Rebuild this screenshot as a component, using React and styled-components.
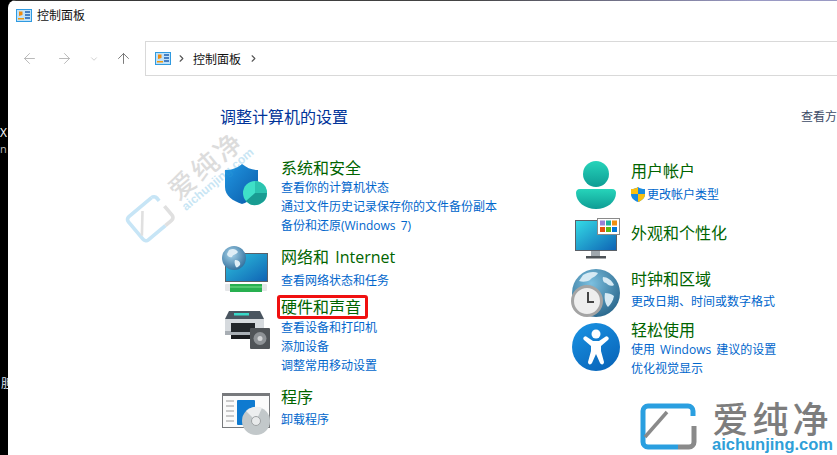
import styled, { createGlobalStyle } from "styled-components";
import { ArrowLeft, ArrowRight, ArrowUp, ChevronDown, ChevronRight } from "lucide-react";

const FONT = `"Open Sans", "Noto Sans CJK SC", sans-serif`;

const Global = createGlobalStyle`
  html, body { margin: 0; padding: 0; background: #000; }
  body { font-family: ${FONT}; }
`;

const Page = styled.div`
  position: relative;
  display: flex;
  width: 837px;
  height: 455px;
  overflow: hidden;
  background: #000;
`;

const Desktop = styled.div`
  position: relative;
  flex: 0 0 8px;
  overflow: hidden;
`;

const DesktopLabel = styled.span`
  position: absolute;
  left: ${(p) => p.$left}px;
  top: ${(p) => p.$top}px;
  font-size: ${(p) => p.$size}px;
  line-height: 1;
  color: ${(p) => p.$color};
`;

const Window = styled.div`
  flex: 1;
  min-width: 0;
  display: flex;
  flex-direction: column;
  overflow: hidden;
  background: #fff;
  border-top-left-radius: 8px;
`;

const TopEdge = styled.div`
  height: 1px;
  background: linear-gradient(90deg, #333 0%, #444 55%, #9a9ac4 90%);
`;

const TitleBar = styled.div`
  height: 28px;
  display: flex;
  align-items: center;
  gap: 5px;
  padding-left: 8px;
  font-size: 12px;
  color: #111;
`;

const NavBar = styled.div`
  margin-top: 12px;
  height: 35px;
  display: flex;
  align-items: center;
  padding-left: 4px;
`;

const NavButton = styled.div`
  width: ${(p) => p.$w}px;
  display: flex;
  justify-content: center;
  color: ${(p) => p.$color};
`;

const AddressBox = styled.div`
  flex: 1;
  height: 100%;
  margin: 0 -10px 0 5px;
  box-sizing: border-box;
  border: 1px solid #d9d9d9;
  display: flex;
  align-items: center;
  padding-left: 9px;
  font-size: 12px;
  color: #111;
`;

const Crumb = styled.span`
  margin: 0 ${(p) => p.$right}px 0 ${(p) => p.$left}px;
  display: flex;
  color: #555;
`;

const Content = styled.div`
  padding: 28px 0 0 213px;
`;

const Header = styled.div`
  display: grid;
  grid-template-columns: 580px max-content;
  align-items: center;
  height: 22px;
  white-space: nowrap;
`;

const Heading = styled.div`
  margin-left: -1px;
  font-size: 16px;
  color: #003399;
`;

const ViewBy = styled.div`
  font-size: 12px;
  color: #3c4a66;
`;

const Columns = styled.div`
  margin-top: 32px;
  display: grid;
  grid-template-columns: 350px 280px;
`;

const Column = styled.div`
  padding-top: ${(p) => p.$top || 0}px;
`;

const Category = styled.div`
  display: flex;
  margin-top: ${(p) => p.$gap || 0}px;
`;

const IconSlot = styled.div`
  flex: 0 0 60px;
  height: 0;
  margin-top: ${(p) => p.$offset || 0}px;
  svg { display: block; overflow: visible; }
`;

const Body = styled.div`
  display: flex;
  flex-direction: column;
  align-items: flex-start;
`;

const Title = styled.div`
  position: relative;
  font-size: 16px;
  line-height: 20px;
  word-spacing: 2px;
  color: #006400;
  white-space: nowrap;
  margin-bottom: ${(p) => p.$after || 0}px;
  ${(p) =>
    p.$marked &&
    `&::after {
      content: "";
      position: absolute;
      left: -4px;
      right: -7px;
      top: -2px;
      bottom: -2px;
      border: 3px solid #f01010;
      border-radius: 3px;
    }`}
`;

const Link = styled.div`
  display: flex;
  align-items: center;
  gap: 2px;
  font-size: 12px;
  line-height: 19px;
  word-spacing: 2px;
  color: #0066cc;
  white-space: nowrap;
`;

const Mark = styled.div`
  position: absolute;
  left: ${(p) => p.$left}px;
  top: ${(p) => p.$top}px;
  display: flex;
  gap: 15px;
  opacity: ${(p) => p.$fade};
  transform: ${(p) => p.$transform};
  svg { flex: none; }
`;

const MarkText = styled.div`
  display: flex;
  flex-direction: column;
  align-items: center;
`;

const MarkName = styled.div`
  font-size: 36px;
  line-height: 33px;
  font-weight: 500;
  letter-spacing: 4px;
  color: #7d7d7d;
`;

const MarkUrl = styled.div`
  font-family: "Liberation Sans", sans-serif;
  font-size: 16.5px;
  line-height: 17px;
  font-weight: 700;
  color: #2f9fd8;
`;

const PanelGlyph = () => (
  <svg width="16" height="13" viewBox="0 0 16 13">
    <rect x="0.5" y="0.5" width="15" height="12" fill="#bfe2fa" stroke="#2f9ae0" />
    <path d="M3 2.500h3.500v3.500l-3.500 1z" fill="#f08c10" />
    <rect x="2" y="9" width="6" height="1.500" fill="#f09a10" />
    <path d="M9 3h5M9 6h5M9 9h5" stroke="#1f5fb0" strokeWidth="1.300" />
  </svg>
);

const ShieldIcon = () => (
  <svg width="48" height="48" viewBox="0 0 48 48">
    <defs>
      <linearGradient id="sh" x1="0" y1="0" x2="1" y2="1">
        <stop offset="0" stopColor="#2197e2" />
        <stop offset="1" stopColor="#0a5aa8" />
      </linearGradient>
    </defs>
    <path d="M21 2c5 4 10 6 16 6v17c0 9-7 14-16 17C12 39 4 34 4 25V8c7 0 12-2 17-6z" fill="url(#sh)" />
    <circle cx="34" cy="31" r="12" fill="#3fe0c8" />
    <path d="M34 31V19a12 12 0 0 1 12 12z" fill="#2cc4b0" />
    <path d="M34 31h12a12 12 0 0 1-21 8z" fill="#199c92" />
  </svg>
);

const NetworkIcon = () => (
  <svg width="48" height="48" viewBox="0 0 48 48">
    <defs>
      <linearGradient id="nm" x1="0" y1="0" x2="1" y2="1">
        <stop offset="0" stopColor="#2fc4de" />
        <stop offset="1" stopColor="#0f62b4" />
      </linearGradient>
      <radialGradient id="ng" cx="0.4" cy="0.35" r="0.8">
        <stop offset="0" stopColor="#a8d4ea" />
        <stop offset="1" stopColor="#1f5f90" />
      </radialGradient>
    </defs>
    <rect x="4.500" y="7.500" width="42" height="28" fill="url(#nm)" stroke="#5a6068" />
    <rect x="4" y="38" width="42" height="7" rx="1" fill="#e4e6e8" />
    <rect x="9" y="38" width="32" height="8" fill="#28b050" />
    <path d="M9 41h32" stroke="#7ae090" />
    <circle cx="13" cy="12" r="12" fill="url(#ng)" />
    <path d="M8 4c4-2 7-1 9 2-2 3-5 2-6 5-2 1-5-1-5-3zM14 14c3 0 6 2 5 5-2 2-3 3-4 2-1-2-2-5-1-7z" fill="#dfeef6" />
  </svg>
);

const PrinterIcon = () => (
  <svg width="48" height="48" viewBox="0 0 48 48">
    <path d="M8 6h31l4 8H4z" fill="#4a5560" />
    <rect x="13" y="8" width="15" height="2.500" fill="#38d8c8" />
    <rect x="4" y="14" width="39" height="16" fill="#d6dade" />
    <rect x="4" y="26" width="39" height="4" fill="#a8aeb4" />
    <rect x="10" y="18" width="24" height="9" fill="#23272b" />
    <rect x="10" y="30" width="22" height="4" fill="#1a1c1f" />
    <rect x="29" y="23" width="20" height="21" rx="1" fill="#505458" />
    <circle cx="39" cy="33.500" r="6.500" fill="#8e9296" />
    <circle cx="39" cy="33.500" r="2.500" fill="#d2d4d6" />
  </svg>
);

const ProgramIcon = () => (
  <svg width="48" height="48" viewBox="0 0 48 48">
    <rect x="1.500" y="1.500" width="47" height="34" fill="#fbfbfb" stroke="#77797c" />
    <rect x="1" y="1" width="48" height="3" fill="#77797c" />
    <path d="M5 9h8M5 14h8M5 19h8M5 24h8M5 29h8" stroke="#9a9a9a" />
    <rect x="16" y="8" width="18" height="25" rx="1" fill="#0e7ad0" />
    <circle cx="35" cy="29" r="14" fill="#c2c8ca" />
    <path d="M35 29L25 19a14 14 0 0 1 16-3z" fill="#eceeef" />
    <circle cx="35" cy="29" r="4.500" fill="#e8eaeb" stroke="#9ea2a4" />
  </svg>
);

const PersonIcon = () => (
  <svg width="48" height="48" viewBox="0 0 48 48">
    <defs>
      <linearGradient id="pr" x1="0" y1="0" x2="0" y2="1">
        <stop offset="0" stopColor="#26d4ba" />
        <stop offset="1" stopColor="#0e9c94" />
      </linearGradient>
    </defs>
    <circle cx="25" cy="13" r="13" fill="url(#pr)" />
    <path d="M9 28h32c3 0 4 2 4 4 0 9-9 16-20 16S5 41 5 32c0-2 1-4 4-4z" fill="url(#pr)" />
  </svg>
);

const DisplayIcon = () => (
  <svg width="48" height="48" viewBox="0 0 48 48">
    <defs>
      <linearGradient id="dm" x1="0" y1="0" x2="1" y2="1">
        <stop offset="0" stopColor="#34dce6" />
        <stop offset="1" stopColor="#0e62b4" />
      </linearGradient>
    </defs>
    <rect x="4.500" y="2.500" width="41" height="30" fill="url(#dm)" stroke="#5a6068" />
    <rect x="20" y="33" width="9" height="5" fill="#a0a8ae" />
    <rect x="15" y="38" width="20" height="2.500" fill="#4e5458" />
    <rect x="26.500" y="0.500" width="22" height="16" fill="#fff" stroke="#8a8a8a" />
    <rect x="29" y="2.500" width="5" height="5" fill="#9a80d8" />
    <rect x="35" y="2.500" width="5" height="5" fill="#1cb0a0" />
    <rect x="41" y="2.500" width="5" height="5" fill="#f09010" />
    <rect x="29" y="9" width="5" height="5" fill="#e85010" />
    <rect x="35" y="9" width="5" height="5" fill="#60b810" />
    <rect x="41" y="9" width="5" height="5" fill="#0078d7" />
  </svg>
);

const ClockIcon = () => (
  <svg width="48" height="48" viewBox="0 0 48 48">
    <defs>
      <radialGradient id="cg" cx="0.4" cy="0.3" r="0.85">
        <stop offset="0" stopColor="#7cc0e0" />
        <stop offset="1" stopColor="#1d5a80" />
      </radialGradient>
    </defs>
    <circle cx="25" cy="24" r="24" fill="url(#cg)" />
    <path d="M12 6c5-3 11-4 15-2-2 4-6 4-8 7-3 2-8 2-11 1zM32 8c4 0 9 3 11 8-3 2-6 0-8-2-2 0-4-3-3-6zM34 24c3 0 7 1 9 3-1 5-3 8-6 11-3-3-4-9-3-14z" fill="#d6eaf4" />
    <circle cx="16" cy="32" r="14.500" fill="#eeeeee" stroke="#a4a4a4" strokeWidth="3" />
    <path d="M17 23v10h6" fill="none" stroke="#444" strokeWidth="2" />
  </svg>
);

const AccessIcon = () => (
  <svg width="48" height="48" viewBox="0 0 48 48">
    <defs>
      <linearGradient id="ac" x1="0" y1="0" x2="0.6" y2="1">
        <stop offset="0" stopColor="#1a94e4" />
        <stop offset="1" stopColor="#0a68bc" />
      </linearGradient>
    </defs>
    <circle cx="25" cy="24" r="24" fill="url(#ac)" />
    <circle cx="25" cy="11" r="4.500" fill="#fff" />
    <path d="M13 14c-1 1-1 2 0 3l7 6v5l-3 11c0 3 3 3 4 1l4-9 4 9c1 2 4 2 4-1l-3-11v-5l7-6c1-1 1-2 0-3-1-1-2-1-3 0l-6 4h-6l-6-4c-1-1-2-1-3 0z" fill="#fff" />
  </svg>
);

const UacShield = () => (
  <svg width="14" height="15" viewBox="0 0 14 15">
    <path d="M7 0c2 1.500 4 2 7 2v5c0 4-3 6.500-7 8-4-1.500-7-4-7-8V2c3 0 5-.5 7-2z" fill="#1a8be0" />
    <path d="M7 0v7H0V2c3 0 5-.5 7-2zM7 7h7c0 4-3 6.500-7 8z" fill="#fbc010" />
  </svg>
);

const LogoGlyph = () => (
  <svg width="57" height="47" viewBox="0 0 57 47">
    <path d="M48 3H8a5 5 0 0 0-5 5v31a5 5 0 0 0 5 5h30" fill="none" stroke="#2a9fe0" strokeWidth="5" />
    <path d="M48 3a5 5 0 0 1 5 5v5" fill="none" stroke="#2a9fe0" strokeWidth="5" />
    <path d="M5 34L27 9" stroke="#8a8a8a" strokeWidth="3.500" />
    <path d="M54 23v16a5 5 0 0 1-5 5H38" fill="none" stroke="#8a8a8a" strokeWidth="5" />
  </svg>
);

const Watermark = ({ left, top, fade, transform }) => (
  <Mark $left={left} $top={top} $fade={fade} $transform={transform}>
    <LogoGlyph />
    <MarkText>
      <MarkName>爱纯净</MarkName>
      <MarkUrl>aichunjing.com</MarkUrl>
    </MarkText>
  </Mark>
);

const left = [
  { title: "系统和安全", icon: <ShieldIcon />, offset: 4, links: ["查看你的计算机状态", "通过文件历史记录保存你的文件备份副本", "备份和还原(Windows 7)"] },
  { title: "网络和 Internet", icon: <NetworkIcon />, offset: -1, gap: 12, after: 4, links: ["查看网络状态和任务"] },
  { title: "硬件和声音", icon: <PrinterIcon />, offset: 8, gap: 7, after: 1, marked: true, links: ["查看设备和打印机", "添加设备", "调整常用移动设置"] },
  { title: "程序", icon: <ProgramIcon />, offset: 5, gap: 12, after: 3, links: ["卸载程序"] },
];

const right = [
  { title: "用户帐户", icon: <PersonIcon />, after: 4, links: ["更改帐户类型"], shield: true },
  { title: "外观和个性化", icon: <DisplayIcon />, offset: -5, gap: 19, links: [] },
  { title: "时钟和区域", icon: <ClockIcon />, gap: 26, after: 3, links: ["更改日期、时间或数字格式"] },
  { title: "轻松使用", icon: <AccessIcon />, offset: 3, gap: 9, links: ["使用 Windows 建议的设置", "优化视觉显示"] },
];

const renderCategory = (c) => (
  <Category key={c.title} $gap={c.gap}>
    <IconSlot $offset={c.offset}>{c.icon}</IconSlot>
    <Body>
      <Title $marked={c.marked} $after={c.after}>{c.title}</Title>
      {c.links.map((l) => (
        <Link key={l}>
          {c.shield && <UacShield />}
          {l}
        </Link>
      ))}
    </Body>
  </Category>
);

export default function App() {
  return (
    <Page>
      <Global />
      <Desktop>
        <DesktopLabel $left={0} $top={127} $size={12} $color="#fff">X</DesktopLabel>
        <DesktopLabel $left={0} $top={143} $size={11} $color="#bbb">n</DesktopLabel>
        <DesktopLabel $left={1} $top={378} $size={12} $color="#d8e0f0">胆</DesktopLabel>
      </Desktop>
      <Window>
        <TopEdge />
        <TitleBar>
          <PanelGlyph />
          控制面板
        </TitleBar>
        <NavBar>
          <NavButton $w={34} $color="#b4b4b4"><ArrowLeft size={17} strokeWidth={1.3} /></NavButton>
          <NavButton $w={36} $color="#b4b4b4"><ArrowRight size={17} strokeWidth={1.3} /></NavButton>
          <NavButton $w={24} $color="#b4b4b4"><ChevronDown size={10} strokeWidth={1.5} /></NavButton>
          <NavButton $w={34} $color="#707070"><ArrowUp size={17} strokeWidth={1.3} /></NavButton>
          <AddressBox>
            <PanelGlyph />
            <Crumb $left={5} $right={6}><ChevronRight size={11} strokeWidth={2.4} /></Crumb>
            控制面板
            <Crumb $left={7} $right={0}><ChevronRight size={11} strokeWidth={2.4} /></Crumb>
          </AddressBox>
        </NavBar>
        <Content>
          <Header>
            <Heading>调整计算机的设置</Heading>
            <ViewBy>查看方式:</ViewBy>
          </Header>
          <Columns>
            <Column>{left.map(renderCategory)}</Column>
            <Column $top={3}>{right.map(renderCategory)}</Column>
          </Columns>
        </Content>
      </Window>
      <Watermark left={93} top={162} fade={0.26} transform="scale(0.74) rotate(-40deg)" />
      <Watermark left={640} top={403} fade={1} transform="none" />
    </Page>
  );
}
